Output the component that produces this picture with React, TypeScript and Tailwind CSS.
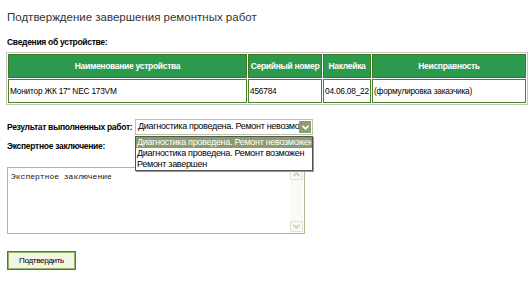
import { useState } from "react";

type Device = {
  name: string;
  serial: string;
  sticker: string;
  fault: string;
};

const device: Device = {
  name: "Монитор ЖК 17\" NEC 173VM",
  serial: "456784",
  sticker: "04.06.08_22",
  fault: "(формулировка заказчика)",
};

const options = [
  "Диагностика проведена. Ремонт невозможен",
  "Диагностика проведена. Ремонт возможен",
  "Ремонт завершен",
];

function Chevron({ up }: { up?: boolean }) {
  return (
    <svg width="7" height="5" viewBox="0 0 7 5" className={up ? "rotate-180" : ""}>
      <path d="M0.5 0.8 L3.5 3.8 L6.5 0.8" stroke="currentColor" strokeWidth="1.6" fill="none" />
    </svg>
  );
}

export default function App() {
  const [selected] = useState(0);

  return (
    <div className="relative w-[532px] h-[288px] bg-white text-black font-['Liberation_Sans',Arial,sans-serif] overflow-hidden">
      <div className="pl-[7px] pt-[10px]">
        <h1 className="text-[11.5px] leading-[15px] text-[#333]">
          Подтверждение завершения ремонтных работ
        </h1>
        <p className="mt-[11px] text-[8.5px] leading-[12px] font-bold tracking-[-0.3px]">
          Сведения об устройстве:
        </p>
      </div>

      <div className="ml-[6px] mt-[4px] w-[522px]">
        <table className="w-full table-fixed border border-[#c6c6c6] border-separate border-spacing-[1px] text-[8.3px] tracking-[-0.2px]">
          <colgroup>
            <col className="w-[239px]" />
            <col className="w-[74px]" />
            <col className="w-[48px]" />
            <col />
          </colgroup>
          <thead>
            <tr className="h-[24px]">
              {["Наименование устройства", "Серийный номер", "Наклейка", "Неисправность"].map((h) => (
                <th
                  key={h}
                  className="border border-[#3f7a22] bg-[#2c9a4c] text-white font-bold text-[8.5px] text-center px-[1px] whitespace-nowrap tracking-[-0.3px]"
                >
                  {h}
                </th>
              ))}
            </tr>
          </thead>
          <tbody>
            <tr className="h-[24px]">
              <td className="border border-[#4b8429] px-[1px] whitespace-nowrap">{device.name}</td>
              <td className="border border-[#4b8429] px-[1px]">{device.serial}</td>
              <td className="border border-[#4b8429] px-[1px]">{device.sticker}</td>
              <td className="border border-[#4b8429] px-[1px]">{device.fault}</td>
            </tr>
          </tbody>
        </table>
      </div>

      <div className="pl-[7px] mt-[14px]">
        <div className="flex items-center h-[16px]">
          <span className="w-[128px] whitespace-nowrap text-[8.5px] font-bold tracking-[-0.3px]">
            Результат выполненных работ:
          </span>
          <div className="relative">
            <div className="flex items-center w-[178px] h-[16px] border border-[#b9c4a4] bg-white">
              <span className="flex-1 overflow-hidden whitespace-nowrap pl-[2px] text-[9px] tracking-[-0.3px]">
                {options[selected]}
              </span>
              <span className="flex items-center justify-center w-[12px] h-[12px] mr-[1px] bg-[#8b9f6c] text-white">
                <Chevron />
              </span>
            </div>
            <ul className="absolute left-0 top-[17px] z-10 w-[178px] border border-[#555] bg-white shadow-[1px_1px_0_#9a9a9a] text-[9px] tracking-[-0.3px]">
              {options.map((o, i) => (
                <li
                  key={o}
                  className={`h-[11px] leading-[11px] pl-[1px] whitespace-nowrap overflow-hidden ${
                    i === selected ? "bg-[#8c9b6e] text-white" : ""
                  }`}
                >
                  {o}
                </li>
              ))}
            </ul>
          </div>
        </div>

        <p className="mt-[5px] text-[8.5px] leading-[12px] font-bold tracking-[-0.3px]">Экспертное заключение:</p>

        <div className="mt-[15px] flex w-[298px] h-[67px] border border-[#aabd8c] bg-white">
          <div className="flex-1 pl-[3px] pt-[4px] font-['Liberation_Mono',monospace] text-[8px] leading-[10px] text-[#111]">
            Экспертное заключение
          </div>
          <div className="flex flex-col justify-between w-[13px] py-[1px] mr-[1px] bg-[#fafaf4]">
            <span className="flex items-center justify-center h-[11px] border border-[#dfe3d4] text-[#c8ccc0]">
              <Chevron up />
            </span>
            <span className="flex items-center justify-center h-[11px] border border-[#dfe3d4] text-[#c8ccc0]">
              <Chevron />
            </span>
          </div>
        </div>

        <button className="mt-[17px] w-[69px] h-[19px] border border-[#4f7f28] shadow-[inset_0_0_0_1px_#8fb564] bg-[#f4f4e2] text-[8px] text-black tracking-[-0.3px]">
          Подтвердить
        </button>
      </div>
    </div>
  );
}
